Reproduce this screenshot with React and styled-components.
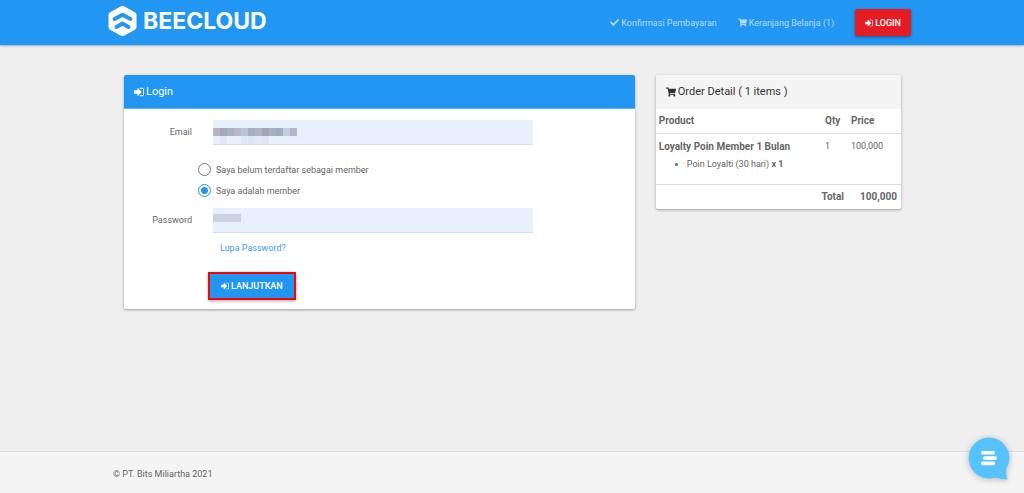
import React, { useState } from "react";
import styled, { createGlobalStyle, css } from "styled-components";
import { FaCheck, FaShoppingCart } from "react-icons/fa";

const GlobalStyle = createGlobalStyle`
  * {
    box-sizing: border-box;
  }

  body {
    margin: 0;
    background: #efefef;
    color: #666;
    font-family: Roboto, "Liberation Sans", sans-serif;
    font-size: 9px;
    line-height: 14px;
  }

  button,
  input {
    font-family: inherit;
    font-size: inherit;
  }
`;

const Page = styled.div`
  display: flex;
  flex-direction: column;
  min-height: 100vh;
`;

const Container = styled.div`
  width: 100%;
  max-width: 798px;
  margin: 0 auto;
`;

const Header = styled.header`
  background: #2196f3;
  box-shadow: 0 1px 2px rgba(0, 0, 0, 0.3);
`;

const HeaderInner = styled(Container)`
  display: flex;
  align-items: center;
  justify-content: space-between;
  min-height: 45px;
`;

const Brand = styled.a`
  display: flex;
  align-items: center;
  gap: 6px;
  margin: 0 0 3px -5px;
  color: #fff;
  font-family: Inter, Roboto, sans-serif;
  font-size: 23px;
  font-weight: 700;
  line-height: 30px;
  text-decoration: none;
`;

const Nav = styled.nav`
  display: flex;
  align-items: center;
  gap: 21px;
`;

const NavLink = styled.a`
  display: flex;
  align-items: center;
  gap: 2px;
  color: #b5dcfb;
  text-decoration: none;
`;

const buttonBase = css`
  display: inline-flex;
  align-items: center;
  justify-content: center;
  gap: 2px;
  color: #fff;
  font-size: 9px;
  font-weight: 500;
  text-transform: uppercase;
  cursor: pointer;
`;

const LoginButton = styled.button`
  ${buttonBase}
  height: 27px;
  padding: 0 10px;
  border: 0;
  border-radius: 2px;
  background: #e61c24;
  box-shadow: 0 1px 3px rgba(0, 0, 0, 0.4);
`;

const Main = styled.main`
  flex: 1;
`;

const Columns = styled(Container)`
  display: grid;
  grid-template-columns: minmax(0, 25fr) minmax(0, 12fr);
  align-items: start;
  gap: 21px;
  padding: 30px 10px 30px 11px;
`;

const Card = styled.section`
  background: #fff;
  border-radius: 2px;
  box-shadow: 0 1px 3px rgba(0, 0, 0, 0.35);
`;

const CardTitle = styled.h2`
  display: flex;
  align-items: center;
  gap: 2px;
  height: 34px;
  margin: 0;
  padding: 0 10px;
  border-bottom: 1px solid ${(p) => (p.$primary ? "#64b5f6" : "#f4f4f4")};
  border-radius: 2px 2px 0 0;
  background: ${(p) => (p.$primary ? "#2196f3" : "#f4f4f4")};
  color: ${(p) => (p.$primary ? "#fff" : "#333")};
  font-size: 11px;
  font-weight: 400;
`;

const Form = styled.form`
  padding: 11px 20% 9px 0;
`;

const Field = styled.div`
  display: grid;
  grid-template-columns: 68px minmax(0, 1fr);
  align-items: center;
  gap: 21px;
`;

const Label = styled.label`
  padding-bottom: 2px;
  text-align: right;
`;

const InputWrap = styled.div`
  position: relative;
`;

const Input = styled.input`
  display: block;
  width: 100%;
  height: 25px;
  padding: 0 4px;
  border: 0;
  border-bottom: 1px solid #d8dee8;
  border-radius: 0;
  background: #e8effd;
  color: #666;
`;

const Mask = styled.div`
  position: absolute;
  top: ${(p) => p.$top}px;
  left: 0;
  display: grid;
  grid-template-columns: repeat(12, 7px);
  grid-auto-rows: 8px;
  pointer-events: none;
`;

const Block = styled.span`
  background: ${(p) => p.$color};
`;

const Radios = styled.div`
  margin: 14px 0 7px 74px;
`;

const RadioLabel = styled.label`
  display: flex;
  align-items: center;
  gap: 5px;
  height: 21px;
`;

const Radio = styled.input`
  appearance: none;
  width: 13px;
  height: 13px;
  margin: 0;
  border: 1px solid #777;
  border-radius: 50%;
  background: #fff;

  &:checked {
    border-color: #2196f3;
    background: radial-gradient(circle, #2196f3 3px, #fff 4px);
  }
`;

const Forgot = styled.a`
  display: block;
  width: fit-content;
  margin: 8px 0 17px 96px;
  color: #3f9cf0;
  text-decoration: none;
`;

const Submit = styled.button`
  ${buttonBase}
  height: 28px;
  margin-left: 84px;
  padding: 0 11px;
  border: 2px solid #ff0000;
  background: #2196f3;
  box-shadow: 0 1px 3px rgba(0, 0, 0, 0.35);
`;

const Table = styled.table`
  width: 100%;
  border-collapse: collapse;
  table-layout: fixed;

  th,
  td {
    padding: 5px 3px;
    text-align: left;
    vertical-align: top;
  }

  th,
  strong {
    font-size: 10px;
  }

  tbody tr,
  tfoot tr {
    border-top: 1px solid #ddd;
  }
`;

const QtyCol = styled.col`
  width: 26px;
`;

const PriceCol = styled.col`
  width: 53px;
`;

const ItemName = styled.strong`
  display: block;
  margin-top: 1px;
`;

const ItemList = styled.ul`
  margin: 3px 0 8px;
  padding-left: 28px;
`;

const TotalCell = styled.td`
  && {
    padding-right: 4px;
    font-size: 10px;
    font-weight: 700;
    text-align: right;
  }
`;

const Footer = styled.footer`
  border-top: 1px solid #ddd;
  background: #f4f4f4;
`;

const FooterInner = styled(Container)`
  padding: 15px 0 12px;
`;

const ChatButton = styled.button`
  position: fixed;
  right: 14px;
  bottom: 13px;
  width: 42px;
  height: 43px;
  padding: 0;
  border: 0;
  background: none;
  filter: drop-shadow(0 1px 3px rgba(0, 0, 0, 0.25));
  cursor: pointer;

  svg {
    display: block;
  }
`;

const SignInIcon = ({ size = 10 }) => (
  <svg width={size} height={size} viewBox="0 128 1536 1536" fill="currentColor" aria-hidden="true">
    <path d="M1184 896q0 26-19 45l-544 544q-19 19-45 19t-45-19-19-45v-288h-448q-26 0-45-19t-19-45v-384q0-26 19-45t45-19h448v-288q0-26 19-45t45-19 45 19l544 544q19 19 19 45zm352-352v704q0 119-84.5 203.5t-203.5 84.5h-320q-13 0-22.5-9.5t-9.5-22.5q0-4-1-20t-.5-26.5 3-23.5 10-19.5 20.5-6.5h320q66 0 113-47t47-113v-704q0-66-47-113t-113-47h-312l-11.5-1-11.5-3-8-5.5-7-9-2-13.5q0-4-1-20t-.5-26.5 3-23.5 10-19.5 20.5-6.5h320q119 0 203.5 84.5t84.5 203.5z" />
  </svg>
);

const Logo = () => (
  <svg width="29" height="30" viewBox="0 0 29 30" aria-hidden="true">
    <path
      d="M14.5 3 L25.5 9 V21 L14.5 27 L3.5 21 V9 Z"
      fill="#fff"
      stroke="#fff"
      strokeWidth="6"
      strokeLinejoin="round"
    />
    <g fill="none" stroke="#2196f3" strokeWidth="3.8" strokeLinecap="round" strokeLinejoin="round">
      <path d="M6.5 13 L14.5 8.8 L22.5 13" />
      <path d="M8.5 21 L14.5 17.5 L20.5 21" />
    </g>
  </svg>
);

const none = "transparent";
const emailBlocks = [
  "#b4b4c4", "#a2a9b9", "#aeb1c0", "#bbb9c6", "#b9c6da", "#a5b0be",
  "#b1b5c6", "#a5a3b5", "#a7b1c1", "#a3acbb", "#bed0dd", "#b4b5c8",
  none, "#e0e6f5", none, none, "#e2e8f6", "#dfe5f3",
  "#e2e8f6", "#e0e5f4", none, none, none, none,
];
const passwordBlocks = ["#cbd2e2", "#cbd2e2", "#cbd2e2", "#cbd2e2"];

const App = () => {
  const [member, setMember] = useState(true);

  return (
    <Page>
      <GlobalStyle />
      <Header>
        <HeaderInner>
          <Brand href="#">
            <Logo />
            BEECLOUD
          </Brand>
          <Nav>
            <NavLink href="#">
              <FaCheck size={9} /> Konfirmasi Pembayaran
            </NavLink>
            <NavLink href="#">
              <FaShoppingCart size={9} /> Keranjang Belanja (1)
            </NavLink>
            <LoginButton type="button">
              <SignInIcon size={8} /> Login
            </LoginButton>
          </Nav>
        </HeaderInner>
      </Header>

      <Main>
        <Columns>
          <Card>
            <CardTitle $primary>
              <SignInIcon /> Login
            </CardTitle>
            <Form onSubmit={(e) => e.preventDefault()}>
              <Field>
                <Label htmlFor="email">Email</Label>
                <InputWrap>
                  <Input id="email" type="email" />
                  <Mask $top={8}>
                    {emailBlocks.map((color, i) => (
                      <Block key={i} $color={color} />
                    ))}
                  </Mask>
                </InputWrap>
              </Field>
              <Radios>
                <RadioLabel>
                  <Radio type="radio" name="member" checked={!member} onChange={() => setMember(false)} />
                  Saya belum terdaftar sebagai member
                </RadioLabel>
                <RadioLabel>
                  <Radio type="radio" name="member" checked={member} onChange={() => setMember(true)} />
                  Saya adalah member
                </RadioLabel>
              </Radios>
              <Field>
                <Label htmlFor="password">Password</Label>
                <InputWrap>
                  <Input id="password" type="password" />
                  <Mask $top={6}>
                    {passwordBlocks.map((color, i) => (
                      <Block key={i} $color={color} />
                    ))}
                  </Mask>
                </InputWrap>
              </Field>
              <Forgot href="#">Lupa Password?</Forgot>
              <Submit type="submit">
                <SignInIcon size={8} /> Lanjutkan
              </Submit>
            </Form>
          </Card>

          <Card>
            <CardTitle>
              <FaShoppingCart size={10} /> Order Detail ( 1 items )
            </CardTitle>
            <Table>
              <colgroup>
                <col />
                <QtyCol />
                <PriceCol />
              </colgroup>
              <thead>
                <tr>
                  <th>Product</th>
                  <th>Qty</th>
                  <th>Price</th>
                </tr>
              </thead>
              <tbody>
                <tr>
                  <td>
                    <ItemName>Loyalty Poin Member 1 Bulan</ItemName>
                    <ItemList>
                      <li>
                        Poin Loyalti (30 hari) <b>x 1</b>
                      </li>
                    </ItemList>
                  </td>
                  <td>1</td>
                  <td>100,000</td>
                </tr>
              </tbody>
              <tfoot>
                <tr>
                  <TotalCell colSpan={2}>Total</TotalCell>
                  <TotalCell>100,000</TotalCell>
                </tr>
              </tfoot>
            </Table>
          </Card>
        </Columns>
      </Main>

      <Footer>
        <FooterInner>© PT. Bits Miliartha 2021</FooterInner>
      </Footer>

      <ChatButton type="button" aria-label="Chat">
        <svg width="42" height="43" viewBox="0 0 42 43">
          <path
            d="M21 0.5 A20.5 20.5 0 0 1 38.5 31.5 C38 35 38 39 39.5 42.5 C35 42.5 31 41.5 27.5 40.5 A20.5 20.5 0 1 1 21 0.5 Z"
            fill="#56c3ff"
          />
          <g fill="#fff">
            <rect x="13" y="14" width="14" height="3.6" rx="1.8" />
            <rect x="15" y="19.3" width="14" height="3.6" rx="1.8" />
            <rect x="13" y="24.6" width="14" height="3.6" rx="1.8" />
          </g>
        </svg>
      </ChatButton>
    </Page>
  );
};

export default App;
